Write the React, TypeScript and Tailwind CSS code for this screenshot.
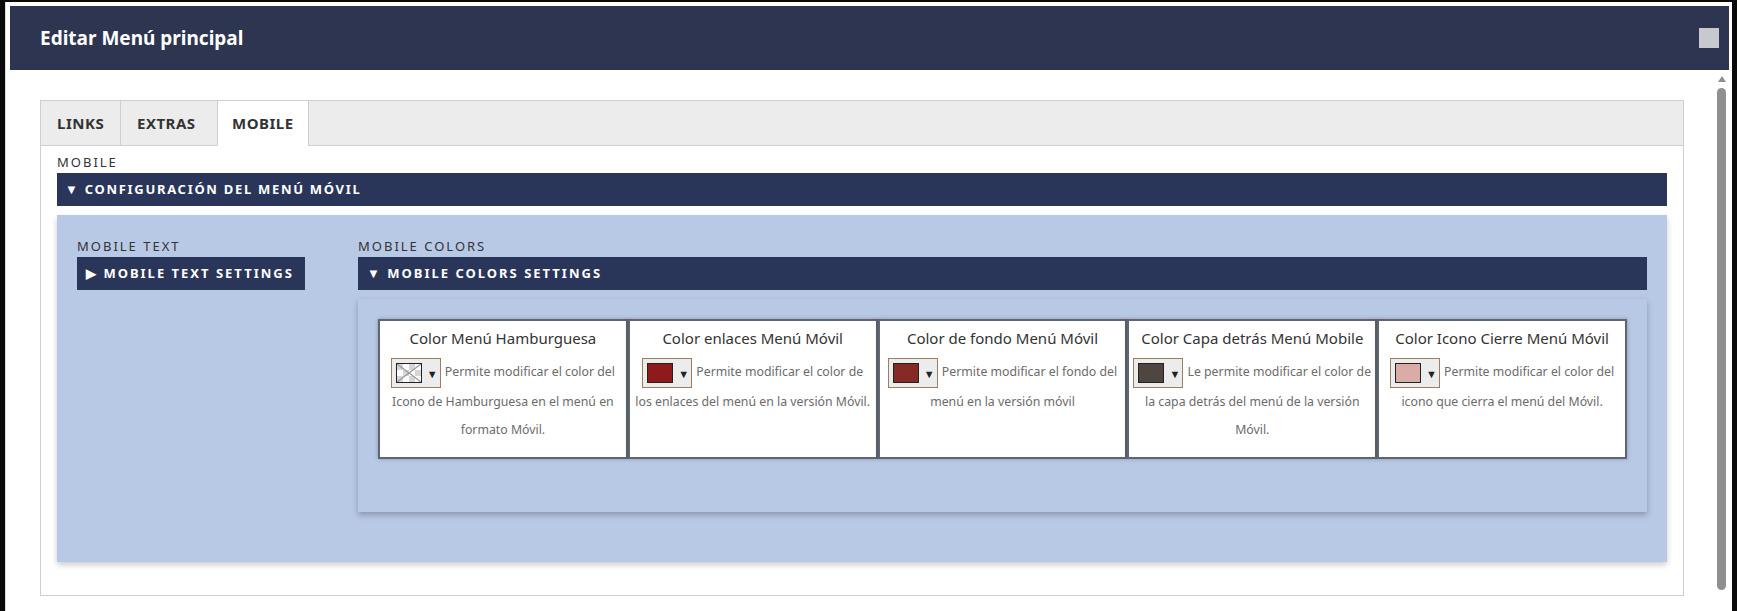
import React from 'react';

type ColorField = {
  title: string;
  color: string | null;
  lines: string[];
};

// las líneas siguen el corte del texto en la captura original
const fields: ColorField[] = [
  {
    title: 'Color Menú Hamburguesa',
    color: null,
    lines: ['Permite modificar el color del', 'Icono de Hamburguesa en el menú en', 'formato Móvil.'],
  },
  {
    title: 'Color enlaces Menú Móvil',
    color: '#8e1a1b',
    lines: ['Permite modificar el color de', 'los enlaces del menú en la versión Móvil.'],
  },
  {
    title: 'Color de fondo Menú Móvil',
    color: '#852a24',
    lines: ['Permite modificar el fondo del', 'menú en la versión móvil'],
  },
  {
    title: 'Color Capa detrás Menú Mobile',
    color: '#4f4541',
    lines: ['Le permite modificar el color de', 'la capa detrás del menú de la versión', 'Móvil.'],
  },
  {
    title: 'Color Icono Cierre Menú Móvil',
    color: '#d9ada6',
    lines: ['Permite modificar el color del', 'icono que cierra el menú del Móvil.'],
  },
];

function ColorPicker({ color }: { color: string | null }) {
  return (
    <span className="inline-flex items-center align-middle w-[50px] h-[30px] border border-[#9b7d62] bg-[#ececec] mr-[4px]">
      <span
        className="ml-[4px] w-[26px] h-[20px] border border-[#222] bg-white"
        style={color ? { backgroundColor: color } : undefined}
      >
        {!color && (
          <svg viewBox="0 0 24 18" className="w-full h-full block">
            <rect x="0" y="0" width="6" height="6" fill="#d6d6d6" />
            <rect x="12" y="0" width="6" height="6" fill="#d6d6d6" />
            <rect x="6" y="6" width="6" height="6" fill="#d6d6d6" />
            <rect x="18" y="6" width="6" height="6" fill="#d6d6d6" />
            <rect x="0" y="12" width="6" height="6" fill="#d6d6d6" />
            <rect x="12" y="12" width="6" height="6" fill="#d6d6d6" />
            <line x1="0" y1="0" x2="24" y2="18" stroke="#9a9a9a" strokeWidth="1.3" />
            <line x1="24" y1="0" x2="0" y2="18" stroke="#9a9a9a" strokeWidth="1.3" />
          </svg>
        )}
      </span>
      <span className="ml-[5px] text-[11px] leading-none text-[#222]">▼</span>
    </span>
  );
}

function ColorCard({ field }: { field: ColorField }) {
  return (
    <div className="flex-1 h-[140px] border-2 border-[#5f6670] bg-white px-[2px] pt-[6px] text-center shadow-[0_0_4px_rgba(0,0,0,0.25)]">
      <div className="text-[15px] leading-[22px] text-[#333]">{field.title}</div>
      <p className="mt-[9px] text-[12.3px] leading-[28px] text-[#6b6b6b] whitespace-nowrap">
        <ColorPicker color={field.color} />
        {field.lines.map((line, i) => (
          <React.Fragment key={i}>
            {i > 0 && <br />}
            {line}
          </React.Fragment>
        ))}
      </p>
    </div>
  );
}

export default function App() {
  return (
    <div className="w-[1737px] h-[611px] overflow-hidden bg-[#0a0a0a] pt-[2px] pl-[5px] font-['Noto_Sans',sans-serif]">
      <div className="w-[1727px] h-[609px] bg-white pt-[4px] pl-[4px] pr-[3px] border-l border-[#ddd]">
        {/* cabecera del diálogo */}
        <div className="h-[64px] bg-[#2e3550] flex items-center justify-between pl-[30px] pr-[10px]">
          <h1 className="text-[19px] font-bold text-white">Editar Menú principal</h1>
          <div className="w-[20px] h-[20px] bg-[#c8c9cf]"></div>
        </div>

        <div className="flex h-[539px]">
          <div className="flex-1 pl-[30px] pt-[30px] pr-[33px]">
            <div className="h-[496px] border border-[#cfcfcf]">
              {/* pestañas */}
              <div className="flex h-[45px] bg-[#ececec] border-b border-[#cfcfcf] text-[15px] font-bold tracking-[0.5px] text-[#333]">
                <div className="w-[80px] flex items-center pl-[16px] border-r border-[#cfcfcf]">LINKS</div>
                <div className="w-[96px] flex items-center pl-[16px]">EXTRAS</div>
                <div className="w-[92px] -mb-px flex items-center pl-[14px] bg-white border-x border-[#cfcfcf]">MOBILE</div>
              </div>

              <div className="px-[16px] pt-[8px]">
                <div className="text-[13px] leading-[16px] tracking-[2px] text-[#333]">MOBILE</div>
                <div className="mt-[3px] h-[33px] bg-[#293559] flex items-center pl-[8px] text-[13px] font-bold tracking-[1.7px] text-white">
                  ▼ CONFIGURACIÓN DEL MENÚ MÓVIL
                </div>

                <div className="mt-[9px] h-[347px] bg-[#b8c9e6] shadow-[0_3px_6px_rgba(0,0,0,0.2)] flex gap-[53px] px-[20px] pt-[22px]">
                  <div className="w-[228px]">
                    <div className="text-[13px] leading-[18px] tracking-[2px] text-[#333]">MOBILE TEXT</div>
                    <div className="mt-[2px] h-[33px] bg-[#293559] flex items-center pl-[9px] text-[13px] font-bold tracking-[2px] text-white">
                      ▶ MOBILE TEXT SETTINGS
                    </div>
                  </div>

                  <div className="flex-1">
                    <div className="text-[13px] leading-[18px] tracking-[2px] text-[#333]">MOBILE COLORS</div>
                    <div className="mt-[2px] h-[33px] bg-[#293559] flex items-center pl-[9px] text-[13px] font-bold tracking-[2px] text-white">
                      ▼ MOBILE COLORS SETTINGS
                    </div>
                    <div className="mt-[9px] h-[213px] bg-[#b8c9e6] shadow-[0_3px_6px_rgba(0,0,0,0.25)] px-[20px] pt-[20px]">
                      <div className="flex">
                        {fields.map((f) => (
                          <ColorCard key={f.title} field={f} />
                        ))}
                      </div>
                    </div>
                  </div>
                </div>
              </div>
            </div>
          </div>

          {/* barra de desplazamiento */}
          <div className="w-[9px] mr-[3px] pt-[6px] flex flex-col items-center">
            <div className="w-0 h-0 border-x-[4px] border-x-transparent border-b-[6px] border-b-[#8f8f8f]"></div>
            <div className="mt-[6px] w-[9px] h-[502px] rounded-full bg-[#8f8f8f]"></div>
          </div>
        </div>
      </div>
    </div>
  );
}
